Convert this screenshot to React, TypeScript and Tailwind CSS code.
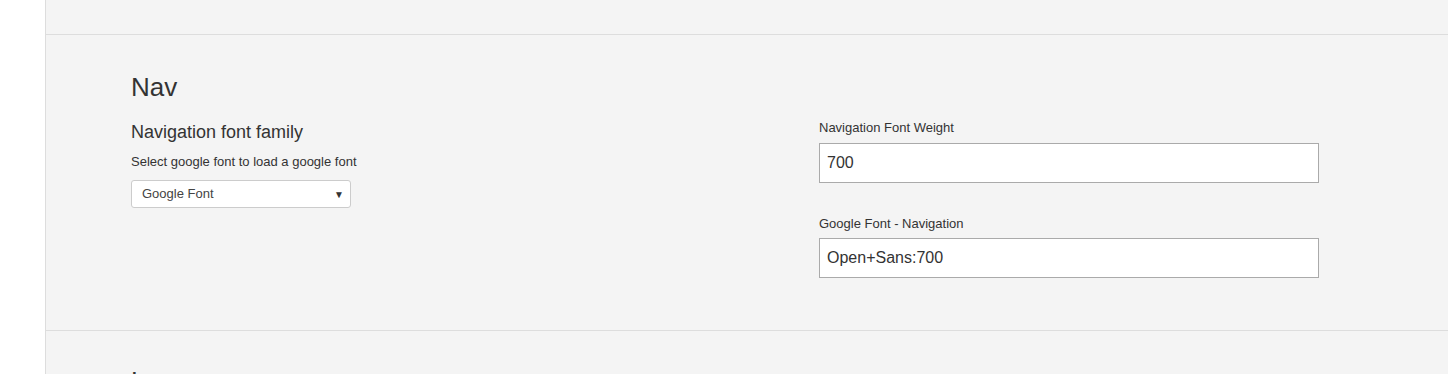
export default function App() {
  return (
    <div className="flex h-[374px] w-[1448px] overflow-hidden bg-white font-['Liberation_Sans',Arial,sans-serif] text-[#333]">
      <div className="w-[45px] shrink-0 bg-white" />
      <div className="flex-1 border-l border-[#dddddd] bg-[#f4f4f4]">
        <div className="h-[35px] border-b border-[#dddddd]" />

        <section className="border-b border-[#dddddd] pb-[52px] pl-[85px] pt-[38px]">
          <div className="flex">
            <div className="w-[688px] shrink-0">
              <h2 className="text-[26px] leading-[28px] text-[#333]">Nav</h2>
              <h3 className="mt-[21px] text-[18px] leading-[20px] text-[#333]">Navigation font family</h3>
              <p className="mt-[11px] text-[13px] leading-[18px] text-[#333]">Select google font to load a google font</p>
              <div className="relative mt-[9px] flex h-[28px] w-[220px] items-center rounded-[3px] border border-[#cccccc] bg-white pl-[10px] text-[13px] text-[#444]">
                Google Font
                <span className="absolute right-[6px] top-[6px] text-[10px] text-[#333]">▼</span>
              </div>
            </div>

            <div className="w-[500px] shrink-0 pt-[46px]">
              <label className="block text-[13px] leading-[18px] text-[#333]">Navigation Font Weight</label>
              <div className="mt-[6px] flex h-[40px] items-center border border-[#aaaaaa] bg-white pl-[7px] text-[16px] text-[#333]">
                700
              </div>
              <label className="mt-[32px] block text-[13px] leading-[18px] text-[#333]">Google Font - Navigation</label>
              <div className="mt-[5px] flex h-[40px] items-center border border-[#aaaaaa] bg-white pl-[7px] text-[16px] text-[#333]">
                Open+Sans:700
              </div>
            </div>
          </div>
        </section>

        <section className="pl-[85px] pt-[36px]">
          <h2 className="text-[26px] leading-[28px] text-[#333]">Logo</h2>
        </section>
      </div>
    </div>
  )
}
